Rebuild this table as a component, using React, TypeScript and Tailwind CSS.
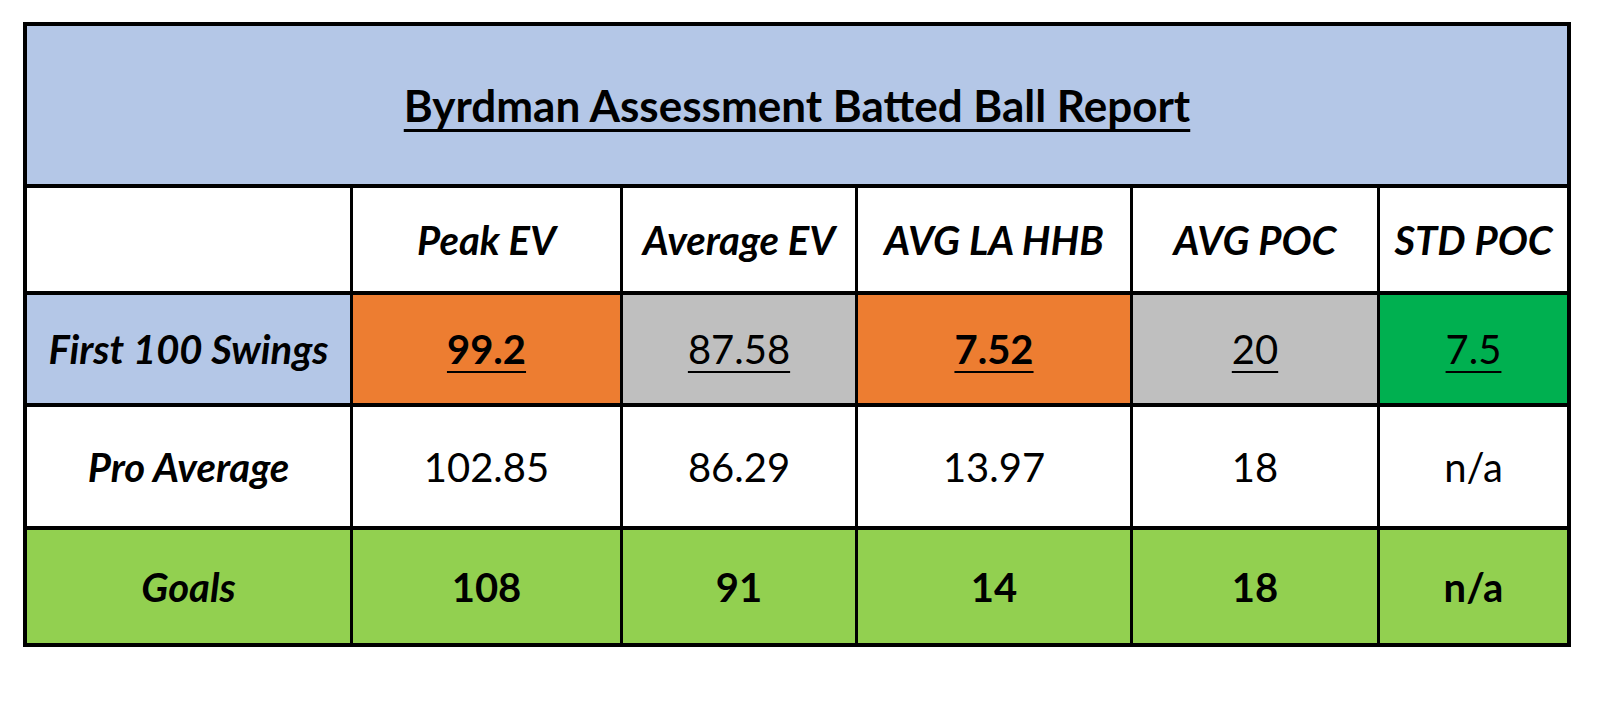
const font = { fontFamily: 'Lato, "Open Sans", sans-serif' }

type Cell = {
  text: string
  bg: string
  bold?: boolean
  underline?: boolean
}

const headers = ['Peak EV', 'Average EV', 'AVG LA HHB', 'AVG POC', 'STD POC']

const rows: { label: string; labelBg: string; cells: Cell[] }[] = [
  {
    label: 'First 100 Swings',
    labelBg: 'bg-[#b4c7e7]',
    cells: [
      { text: '99.2', bg: 'bg-[#ed7d31]', bold: true, underline: true },
      { text: '87.58', bg: 'bg-[#bfbfbf]', underline: true },
      { text: '7.52', bg: 'bg-[#ed7d31]', bold: true, underline: true },
      { text: '20', bg: 'bg-[#bfbfbf]', underline: true },
      { text: '7.5', bg: 'bg-[#00b050]', underline: true },
    ],
  },
  {
    label: 'Pro Average',
    labelBg: 'bg-white',
    cells: [
      { text: '102.85', bg: 'bg-white' },
      { text: '86.29', bg: 'bg-white' },
      { text: '13.97', bg: 'bg-white' },
      { text: '18', bg: 'bg-white' },
      { text: 'n/a', bg: 'bg-white' },
    ],
  },
  {
    label: 'Goals',
    labelBg: 'bg-[#92d050]',
    cells: [
      { text: '108', bg: 'bg-[#92d050]', bold: true },
      { text: '91', bg: 'bg-[#92d050]', bold: true },
      { text: '14', bg: 'bg-[#92d050]', bold: true },
      { text: '18', bg: 'bg-[#92d050]', bold: true },
      { text: 'n/a', bg: 'bg-[#92d050]', bold: true },
    ],
  },
]

export default function App() {
  return (
    <div className="w-[1600px] h-[707px] bg-white pt-[22px] pl-[23px] text-black" style={font}>
      <div className="w-[1548px] h-[625px] bg-black p-[4px] grid grid-cols-[323px_267px_232px_272px_244px_187px] grid-rows-[158px_103px_108px_119px_113px] gap-x-[3px] gap-y-[4px]">
        {/* Title */}
        <div className="col-span-6 bg-[#b4c7e7] flex items-center justify-center">
          <span className="text-[44px] font-bold underline decoration-[3px] underline-offset-[7px]">
            Byrdman Assessment Batted Ball Report
          </span>
        </div>

        {/* Header row */}
        <div className="bg-white" />
        {headers.map(h => (
          <div key={h} className="bg-white flex items-center justify-center">
            <span className="text-[40px] font-bold italic">{h}</span>
          </div>
        ))}

        {/* Data rows */}
        {rows.map(r => (
          <>
            <div key={r.label} className={`${r.labelBg} flex items-center justify-center`}>
              <span className="text-[40px] font-bold italic">{r.label}</span>
            </div>
            {r.cells.map((c, i) => (
              <div key={r.label + i} className={`${c.bg} flex items-center justify-center`}>
                <span
                  className={`text-[40px] ${c.bold ? 'font-bold' : 'font-normal'} ${
                    c.underline ? 'underline decoration-[2px] underline-offset-[7px]' : ''
                  }`}
                >
                  {c.text}
                </span>
              </div>
            ))}
          </>
        ))}
      </div>
    </div>
  )
}
